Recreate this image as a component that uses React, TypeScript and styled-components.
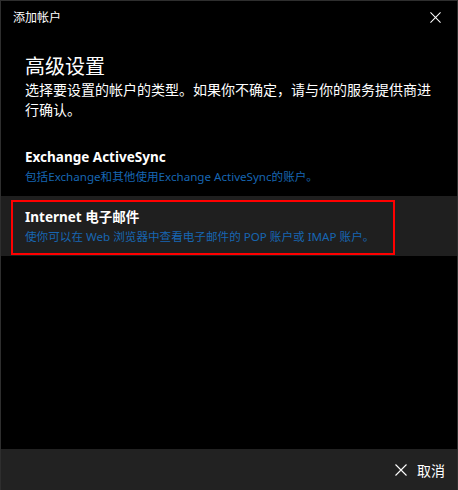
import React from "react";
import styled, { createGlobalStyle } from "styled-components";

const Global = createGlobalStyle`
  html, body { margin: 0; padding: 0; background: #000; }
  body { font-family: "Noto Sans", "Noto Sans CJK SC", sans-serif; color: #fff; }
`;

const Window = styled.div`
  box-sizing: border-box;
  width: 458px;
  height: 490px;
  background: #000;
  border: 1px solid #2e2e2e;
  border-bottom: none;
  display: flex;
  flex-direction: column;
`;

const TitleBar = styled.div`
  height: 31px;
  display: flex;
  align-items: center;
  justify-content: space-between;
  padding: 0 15px 0 12px;
`;

const Title = styled.span`
  font-size: 12px;
  font-family: "Noto Sans CJK SC", sans-serif;
  color: #fff;
`;

const CloseButton = styled.div`
  width: 12px;
  height: 12px;
  display: flex;
  margin-top: 2px;
`;

const Content = styled.div`
  flex: 1;
  display: flex;
  flex-direction: column;
`;

const Header = styled.div`
  padding: 21px 18px 0 24px;
`;

const Heading = styled.h1`
  margin: 0;
  font-size: 20px;
  line-height: 26px;
  font-weight: 400;
  font-family: "Noto Sans CJK SC", sans-serif;
`;

const Description = styled.p`
  margin: 0;
  font-size: 14px;
  line-height: 20px;
  font-family: "Noto Sans CJK SC", sans-serif;
`;

const OptionList = styled.div`
  margin-top: 17px;
  display: flex;
  flex-direction: column;
`;

const Option = styled.div<{ $selected?: boolean }>`
  position: relative;
  padding: 11px 24px 9px 24px;
  background: ${(p) => (p.$selected ? "#1f1f1f" : "transparent")};
  display: flex;
  flex-direction: column;
`;

const OptionTitle = styled.div`
  font-size: 13.5px;
  line-height: 20px;
  font-weight: 700;
  font-family: "Noto Sans", "Noto Sans CJK SC", sans-serif;
  color: #fff;
`;

const OptionSub = styled.div`
  font-size: 11.6px;
  line-height: 20px;
  font-family: "Noto Sans", "Noto Sans CJK SC", sans-serif;
  color: #1766b2;
`;

const Highlight = styled.div`
  position: absolute;
  left: 10px;
  top: 4px;
  width: 384px;
  height: 55px;
  box-sizing: border-box;
  border: 2px solid #ff0000;
  pointer-events: none;
`;

const Footer = styled.div`
  height: 41px;
  background: #222;
  display: flex;
  align-items: center;
  justify-content: flex-end;
  padding: 0 12px 0 0;
`;

const CancelButton = styled.div`
  display: flex;
  align-items: center;
  gap: 10px;
  font-size: 14px;
  font-family: "Noto Sans CJK SC", sans-serif;
  color: #fff;
  margin-top: 1px;
`;

const XIcon = ({ size }: { size: number }) => (
  <svg width={size} height={size} viewBox="0 0 12 12">
    <path d="M0.5 0.5 L11.5 11.5 M11.5 0.5 L0.5 11.5" stroke="#fff" strokeWidth="1.1" fill="none" />
  </svg>
);

export default function App() {
  return (
    <>
      <Global />
      <Window>
        <TitleBar>
          <Title>添加帐户</Title>
          <CloseButton>
            <XIcon size={11} />
          </CloseButton>
        </TitleBar>
        <Content>
          <Header>
            <Heading>高级设置</Heading>
            <Description>
              选择要设置的帐户的类型。如果你不确定，请与你的服务提供商进行确认。
            </Description>
          </Header>
          <OptionList>
            <Option>
              <OptionTitle>Exchange ActiveSync</OptionTitle>
              <OptionSub>包括Exchange和其他使用Exchange ActiveSync的账户。</OptionSub>
            </Option>
            <Option $selected>
              <Highlight />
              <OptionTitle>Internet 电子邮件</OptionTitle>
              <OptionSub>使你可以在 Web 浏览器中查看电子邮件的 POP 账户或 IMAP 账户。</OptionSub>
            </Option>
          </OptionList>
        </Content>
        <Footer>
          <CancelButton>
            <XIcon size={12} />
            <span>取消</span>
          </CancelButton>
        </Footer>
      </Window>
    </>
  );
}
